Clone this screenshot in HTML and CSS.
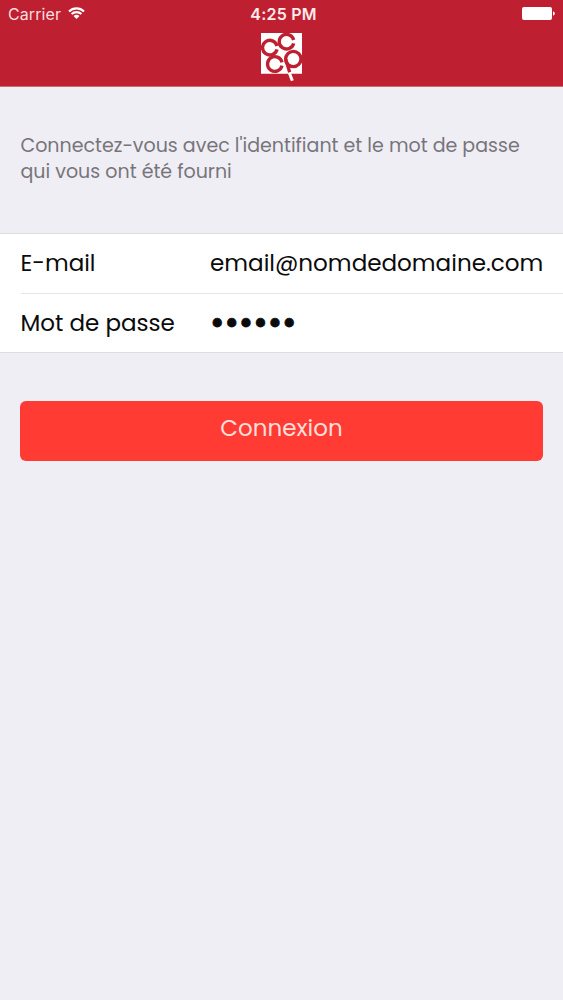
FILE: index.html
```html
<!DOCTYPE html>
<html lang="fr">
<head>
    <meta charset="UTF-8">
    <meta name="viewport" content="width=device-width, initial-scale=1.0">
    <title>Connexion</title>
    <link rel="stylesheet" href="styles.css">
</head>
<body>
    <header class="header">
        <!-- Barre d'état -->
        <div class="status-bar">
            <div class="carrier">
                <span class="carrier-name">Carrier</span>
                <svg class="wifi" viewBox="0 0 17 12" width="17" height="12">
                    <path d="M1 4.4a10.7 10.7 0 0 1 15 0M3.6 7.1a7 7 0 0 1 9.8 0" fill="none" stroke="currentColor" stroke-width="2.1"/>
                    <path d="M5.5 9.1a4.3 4.3 0 0 1 6 0L8.5 12z" fill="currentColor"/>
                </svg>
            </div>
            <div class="time">4:25 PM</div>
            <svg class="battery" viewBox="0 0 33 13" width="33" height="13">
                <rect width="30" height="13" rx="2" fill="currentColor"/>
                <path d="M31 4.5c2.4.3 2.4 3.7 0 4z" fill="currentColor"/>
            </svg>
        </div>
        <!-- Logo -->
        <svg class="logo" viewBox="33 15 123 144" width="41" height="48">
            <path d="M33 15h123v122H33z" fill="#fff"/>
            <path d="M117 132l10 26" stroke="#fff" stroke-width="9"/>
            <g fill="none" stroke="#be2031" stroke-width="10">
                <path d="M81 54a22 22 0 1 0 0 10"/>
                <path d="M131 36a22 22 0 1 0 0 10"/>
                <path d="M96 103a22 22 0 1 0 0 10"/>
                <circle cx="130" cy="93" r="23"/>
                <path d="M107 94l12 39"/>
            </g>
        </svg>
    </header>

    <main>
        <p class="intro">
            Connectez-vous avec l'identifiant et le mot de passe<br>
            qui vous ont été fourni
        </p>

        <!-- Formulaire de connexion -->
        <form>
            <div class="fields">
                <div class="field">
                    <label for="email">E-mail</label>
                    <input id="email" type="text" value="email@nomdedomaine.com">
                </div>
                <div class="field">
                    <label for="password">Mot de passe</label>
                    <input id="password" class="password" type="password" value="secret">
                </div>
            </div>
            <button class="submit" type="button">Connexion</button>
        </form>
    </main>
</body>
</html>
```

FILE: styles.css
```css
* {
    box-sizing: border-box;
}
body {
    margin: 0;
    min-height: 100vh;
    background-color: #efeef4;
    color: #0b0b0c;
    font-family: Poppins, Inter, sans-serif;
}

/* En-tête */
.header {
    height: 87px;
    background-color: #be2031;
    border-bottom: 1px solid #d06a77;
    color: #fff;
}
.status-bar {
    display: grid;
    grid-template-columns: 1fr auto 1fr;
    align-items: center;
    height: 28px;
    padding: 0 8px;
    font-family: Inter, sans-serif;
    font-size: 16px;
}
.carrier {
    display: flex;
    align-items: center;
    gap: 7px;
    color: #fbdede;
}
.carrier-name {
    letter-spacing: 0.1px;
}
.wifi {
    color: #fff;
    margin-bottom: 2px;
}
.time {
    padding-left: 4px;
    color: #fdeaea;
    font-weight: 600;
    letter-spacing: 0.2px;
}
.battery {
    justify-self: end;
    margin-bottom: 1px;
}
.logo {
    display: block;
    margin: 5px auto 0;
}

/* Texte d'introduction */
.intro {
    height: 146px;
    margin: 0;
    padding: 46px 20px 0 20.5px;
    color: #77757b;
    font-size: 19.03px;
    line-height: 26px;
    white-space: nowrap;
}

/* Champs */
.fields {
    background-color: #fff;
    border-top: 1px solid #dddce1;
    border-bottom: 1px solid #dddce1;
}
.field {
    display: flex;
    align-items: center;
    height: 59px;
    margin-left: 20.5px;
    padding-bottom: 1px;
    font-size: 23px;
}
.field + .field {
    border-top: 1px solid #e6e5e9;
    padding-bottom: 0;
}
.field label {
    width: 189.5px;
    padding-bottom: 1px;
    white-space: nowrap;
}
.field input {
    flex: 1;
    min-width: 0;
    padding: 0;
    border: none;
    outline: none;
    background: none;
    color: inherit;
    font: inherit;
    font-size: 23.07px;
}
.field .password {
    height: 40px;
    margin-bottom: 1px;
    font-size: 35px;
    -webkit-text-stroke: 0.8px #0b0b0c;
}

/* Bouton */
.submit {
    display: block;
    width: 523px;
    height: 60px;
    margin: 48px 20px 0;
    padding: 0 0 6px;
    background-color: #ff3b33;
    border: none;
    border-radius: 6px;
    color: #ffdfda;
    font-family: inherit;
    font-size: 23px;
    cursor: pointer;
}
```
